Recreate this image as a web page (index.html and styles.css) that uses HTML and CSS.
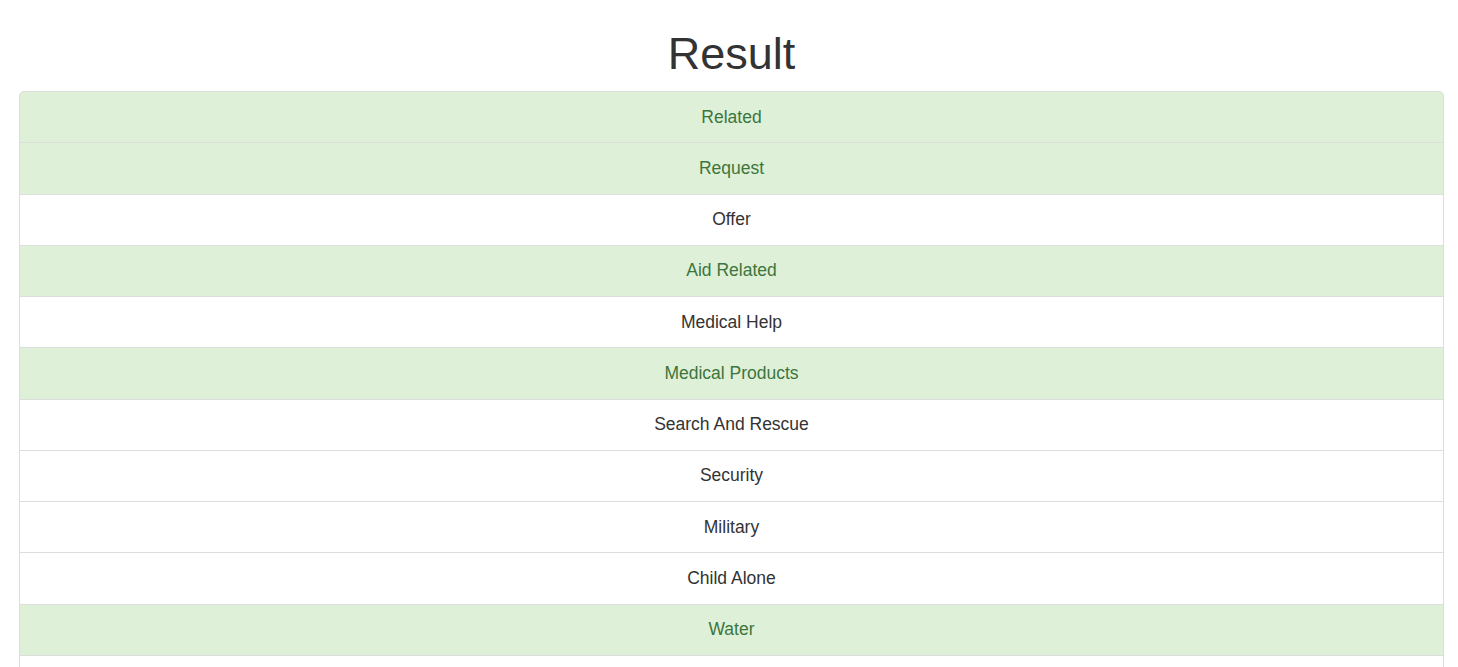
FILE: index.html
```html
<!DOCTYPE html>
<html lang="en">
<head>
<meta charset="utf-8">
<title>Result</title>
<link rel="stylesheet" href="styles.css">
</head>
<body>
<div class="container">
  <h1 class="title">Result</h1>
  <ul class="list-group">
    <li class="item success">Related</li>
    <li class="item success">Request</li>
    <li class="item">Offer</li>
    <li class="item success">Aid Related</li>
    <li class="item">Medical Help</li>
    <li class="item success">Medical Products</li>
    <li class="item">Search And Rescue</li>
    <li class="item">Security</li>
    <li class="item">Military</li>
    <li class="item">Child Alone</li>
    <li class="item success">Water</li>
    <li class="item">Food</li>
    <li class="item">Shelter</li>
  </ul>
</div>
</body>
</html>
```
FILE: styles.css
```css
html, body {
  margin: 0;
  padding: 0;
  overflow: hidden;
  background: #fff;
}
body {
  font-family: "Liberation Sans", Arial, Helvetica, sans-serif;
  font-size: 17.5px;
  color: #333;
}
.container {
  width: 1425px;
  margin-left: 19px;
}
.title {
  margin: 29px 0 12px;
  font-size: 45px;
  font-weight: 500;
  line-height: 50px;
  text-align: center;
  color: #333;
}
.list-group {
  list-style: none;
  margin: 0;
  padding: 0;
}
.item {
  padding: 12.5px 18.75px;
  line-height: 25.25px;
  border: 1px solid #ddd;
  margin-bottom: -1px;
  background: #fff;
  text-align: center;
  color: #333;
}
.item:first-child {
  border-top-left-radius: 5px;
  border-top-right-radius: 5px;
}
.item.success {
  background: #dff0d8;
  color: #3c763d;
}
```
